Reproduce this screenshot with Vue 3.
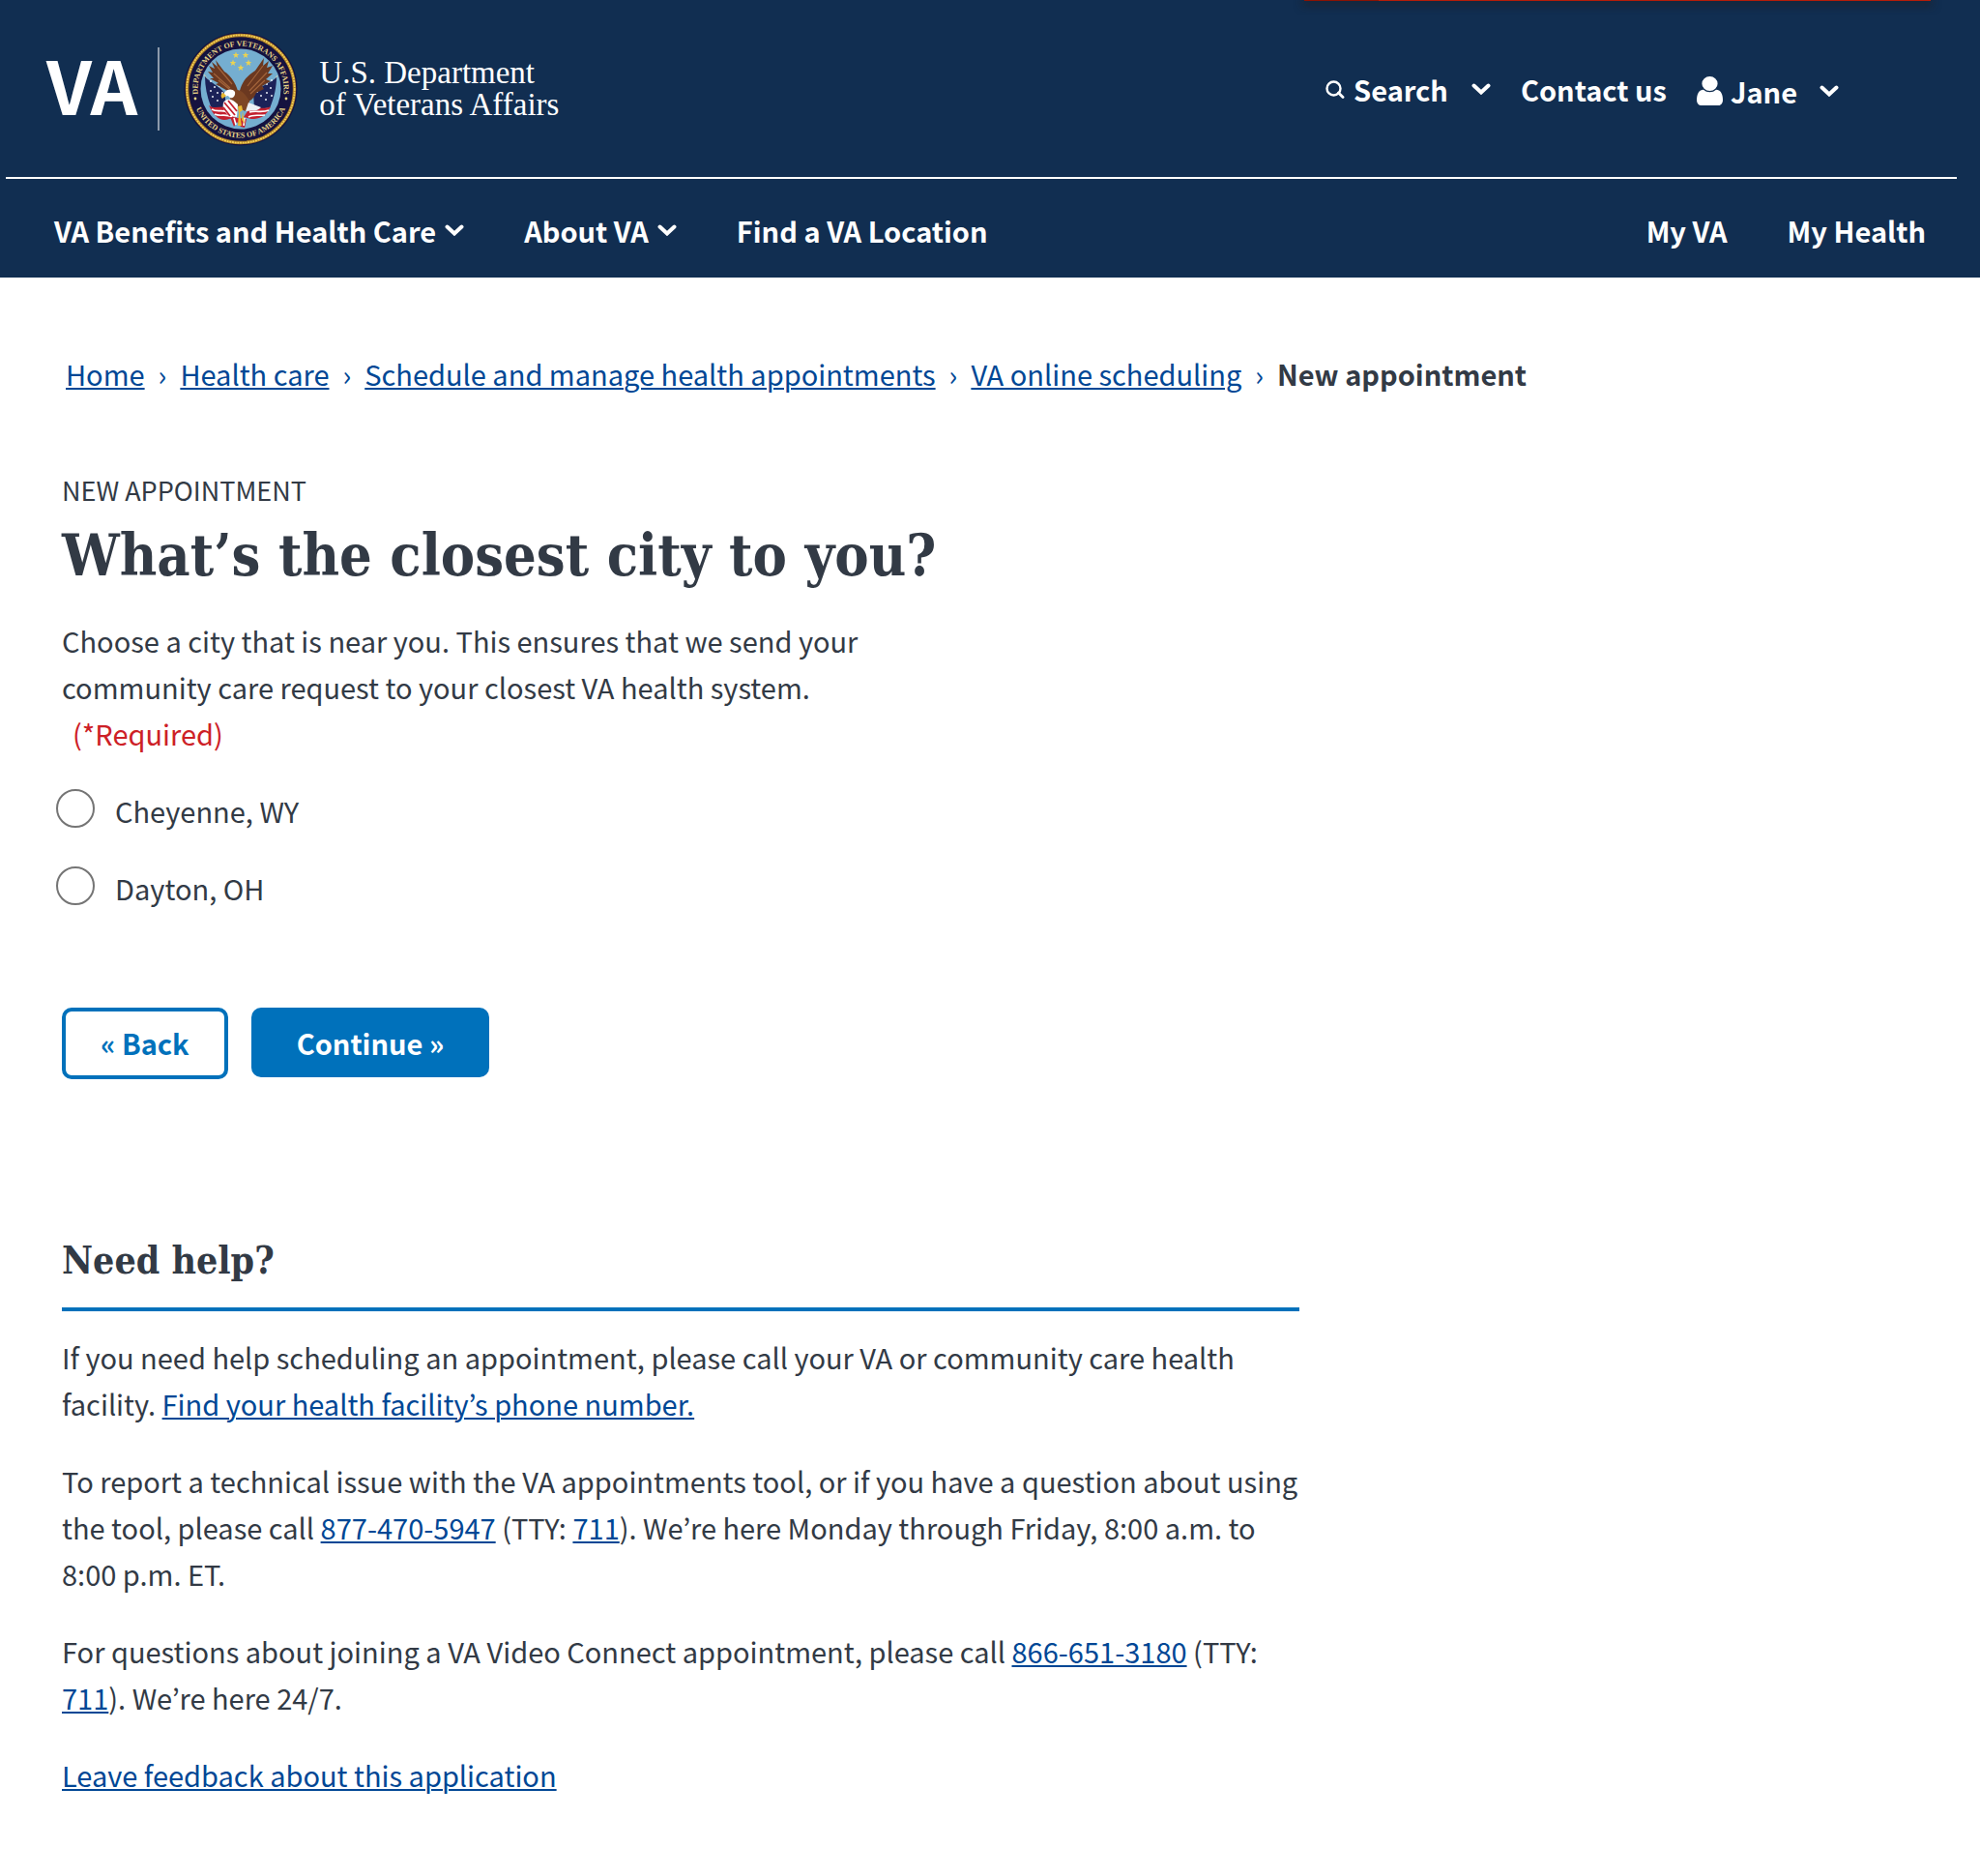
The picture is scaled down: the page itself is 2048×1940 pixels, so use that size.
<script setup>
import { ref } from 'vue'

const crumbs = [
  'Home',
  'Health care',
  'Schedule and manage health appointments',
  'VA online scheduling',
]
const cities = [
  { id: 'cheyenne', label: 'Cheyenne, WY' },
  { id: 'dayton', label: 'Dayton, OH' },
]
const city = ref('')

// Centres of the five stars above the eagle
const stars = [[-5, -35], [5, -35], [-8, -27], [8, -27], [0, -22]]
// Stars on the two flags
const flagStars = [
  [-31, -8], [-27, -2], [-31, 2], [-24, 4], [-29, 8], [-22, -3], [-24, 12], [-19, 4],
  [32, -9], [27, -5], [22, -1], [31, -1], [27, 4], [32, 7], [21, 7], [26, 11], [17, 3],
]
</script>

<template>
  <header class="header">
    <div class="alert-edge"></div>
    <div class="masthead">
      <a class="logo" href="#">
        <span class="logo-va">VA</span>
        <span class="logo-rule"></span>
        <svg class="seal" viewBox="-59 -59 118 118" role="img" aria-label="Seal">
          <defs>
            <path id="seal-top" d="M-43.4 10 A44.5 44.5 0 1 1 43.4 10" />
            <path id="seal-bottom" d="M-48.5 14 A50.5 50.5 0 0 0 48.5 14" />
          </defs>
          <circle r="58.5" fill="#15123f" />
          <circle r="55.5" fill="none" stroke="#a87a25" stroke-width="3.4" />
          <circle r="55.7" fill="none" stroke="#f3cf57" stroke-width="1.8" stroke-dasharray="2 0.7" />
          <circle r="43" fill="#15123f" />
          <circle r="41.5" fill="#75aed0" />
          <g class="seal-text">
            <text><textPath href="#seal-top" startOffset="50%" text-anchor="middle">DEPARTMENT OF VETERANS AFFAIRS</textPath></text>
            <text><textPath href="#seal-bottom" startOffset="50%" text-anchor="middle">UNITED STATES OF AMERICA</textPath></text>
          </g>
          <circle cx="-47" cy="10" r="1.4" fill="#e5d386" />
          <circle cx="47" cy="10" r="1.4" fill="#e5d386" />
          <path
            v-for="(s, i) in stars"
            :key="i"
            :transform="`translate(${s[0]} ${s[1]})`"
            d="M0 -3.4 L.9 -1 3.3 -1 1.4 .6 2.1 3 0 1.6 -2.1 3 -1.4 .6 -3.3 -1 -.9 -1Z"
            fill="#ecd34f"
          />
          <!-- flag poles and unions -->
          <path d="M-38 -15 L-8 30 M38 -14 L8 28" stroke="#d9d0b0" stroke-width="1" />
          <path d="M-37 -13 C-32 -7 -22 -3 -17 4 L-14 22 C-22 19 -27 22 -31 18 C-35 8 -37 -3 -37 -13Z" fill="#1c2258" />
          <path d="M37 -12 C31 -6 22 -4 13 4 L14 20 C22 23 26 18 30 20 C35 8 37 -3 37 -12Z" fill="#1c2258" />
          <circle v-for="(s, i) in flagStars" :key="'f' + i" :cx="s[0]" :cy="s[1]" r="1" fill="#e8ecf5" />
          <!-- stripes -->
          <path d="M-33 17 C-26 22 -20 16 -12 20 L-4 29 -12 31 C-20 34 -27 30 -33 17Z" fill="#c3202f" />
          <path d="M-30 21 C-24 25 -18 20 -11 25 M-27 26 C-21 29 -16 25 -9 29" stroke="#fff" stroke-width="1.6" fill="none" />
          <path d="M31 18 C23 22 17 18 9 20 L3 29 11 31 C19 31 26 29 31 18Z" fill="#c3202f" />
          <path d="M29 22 C22 25 16 22 9 24 M25 27 C18 28 13 26 8 29" stroke="#fff" stroke-width="1.6" fill="none" />
          <path d="M-11 29 L-7 39 -4 34 0 39 4 40 6 31Z" fill="#c3202f" />
          <path d="M-7 30 L-5 37 M4 30 L3 38" stroke="#fff" stroke-width="1.6" />
          <!-- wings and body -->
          <path d="M-2 7 C-3 -3 -10 -14 -17 -18 L-26 -30 -24 -23 -30 -28 -27 -21 -33 -24 -29 -17 -34 -18 -28 -11 -32 -11 -23 -6 -26 -5 -17 0 C-10 4 -6 8 -2 7Z" fill="#6b3820" />
          <path d="M-2 8 C-1 -4 5 -13 15 -19 L24 -32 23 -24 29 -29 27 -22 33 -24 28 -16 33 -16 26 -10 31 -8 22 -3 24 0 16 4 C13 12 6 15 1 14Z" fill="#6b3820" />
          <path d="M-24 -23 L-9 -5 M-28 -16 L-11 -1 M-23 -9 L-12 0 M23 -24 L7 -3 M27 -17 L9 2 M25 -9 L10 5" stroke="#a2633a" stroke-width="1.2" fill="none" />
          <path d="M-11 3 C-6 -2 3 2 6 8 C11 14 10 20 5 23 C-2 21 -8 16 -11 10Z" fill="#7d4524" />
          <path d="M-18 8 C-18 1 -10 -2 -6 3 C-5 8 -10 12 -13 7Z" fill="#fff" />
          <path d="M-18 4 C-21 5 -21 8 -19 10 L-15 7Z" fill="#e9b931" />
          <!-- shield and tail -->
          <path d="M-18 14 C-14 9 -9 10 -3 16 L-4 29 C-13 29 -20 23 -18 14Z" fill="#fff" />
          <path d="M-17 14 L-6 27 M-13 12 L-4 23 M-18 19 L-11 28" stroke="#c3202f" stroke-width="1.8" />
          <path d="M8 14 L21 19 C17 24 11 22 5 23Z" fill="#edf0f4" />
          <path d="M-3 18 L1 17 2 22 -1 24 1 38 -3 38 -2 25Z M2 23 L4 36 1 32Z" fill="#e9b931" />
        </svg>
        <span class="logo-name">U.S. Department<br />of Veterans Affairs</span>
      </a>
      <div class="tools">
        <button class="tool search" type="button">
          <svg class="icon-search" viewBox="0 0 20 20" aria-hidden="true">
            <circle cx="8.5" cy="9.5" r="7" fill="none" stroke="currentColor" stroke-width="2.4" />
            <path d="M13.5 14 L18 18.5" stroke="currentColor" stroke-width="2.8" stroke-linecap="round" />
          </svg>
          <span>Search</span>
          <svg class="chevron" viewBox="0 0 20 12" aria-hidden="true"><path d="M2.5 2.5 L10 9.5 L17.5 2.5" /></svg>
        </button>
        <a class="tool contact" href="#">Contact us</a>
        <button class="tool account" type="button">
          <svg class="icon-user" viewBox="256 128 1280 1536" preserveAspectRatio="none" aria-hidden="true">
            <path fill="currentColor" d="M1536 1399q0 109-62.500 187t-150.500 78h-854q-88 0-150.500-78t-62.500-187q0-85 8.500-160.500t31.500-152 58.500-131 94-89 134.500-34.500q131 128 313 128t313-128q76 0 134.500 34.500t94 89 58.500 131 31.500 152 8.500 160.500zM1280 512q0 159-112.500 271.500t-271.500 112.500-271.500-112.500-112.500-271.500 112.500-271.500 271.500-112.500 271.500 112.500 112.500 271.500z" />
          </svg>
          <span>Jane</span>
          <svg class="chevron" viewBox="0 0 20 12" aria-hidden="true"><path d="M2.5 2.5 L10 9.5 L17.5 2.5" /></svg>
        </button>
      </div>
    </div>
    <nav class="nav" aria-label="Main">
      <button class="nav-item" type="button">
        VA Benefits and Health Care
        <svg class="chevron" viewBox="0 0 20 12" aria-hidden="true"><path d="M2.5 2.5 L10 9.5 L17.5 2.5" /></svg>
      </button>
      <button class="nav-item" type="button">
        About VA
        <svg class="chevron" viewBox="0 0 20 12" aria-hidden="true"><path d="M2.5 2.5 L10 9.5 L17.5 2.5" /></svg>
      </button>
      <a class="nav-item" href="#">Find a VA Location</a>
      <a class="nav-item nav-end" href="#">My VA</a>
      <a class="nav-item" href="#">My Health</a>
    </nav>
  </header>

  <main class="main">
    <nav class="crumbs" aria-label="Breadcrumb">
      <template v-for="c in crumbs" :key="c">
        <a href="#">{{ c }}</a>
        <span class="crumb-sep">›</span>
      </template>
      <strong>New appointment</strong>
    </nav>

    <form class="form" @submit.prevent>
      <p class="eyebrow">NEW APPOINTMENT</p>
      <h1>What’s the closest city to you?</h1>
      <fieldset class="cities">
        <legend>
          Choose a city that is near you. This ensures that we send your community care request to
          your closest VA health system. <span class="required">(*Required)</span>
        </legend>
        <div v-for="c in cities" :key="c.id" class="city">
          <input :id="c.id" v-model="city" type="radio" name="city" :value="c.id" />
          <label :for="c.id">{{ c.label }}</label>
        </div>
      </fieldset>
      <div class="actions">
        <button class="btn btn-back" type="button">« Back</button>
        <button class="btn btn-next" type="submit">Continue »</button>
      </div>
    </form>

    <section class="help">
      <h2>Need help?</h2>
      <p>
        If you need help scheduling an appointment, please call your VA or community care health
        facility. <a href="#">Find your health facility’s phone number.</a>
      </p>
      <p>
        To report a technical issue with the VA appointments tool, or if you have a question about
        using the tool, please call <a class="phone" href="#">877-470-5947</a> (TTY: <a href="#">711</a>). We’re here
        Monday through Friday, 8:00 a.m. to 8:00 p.m. ET.
      </p>
      <p>
        For questions about joining a VA Video Connect appointment, please call
        <a class="phone" href="#">866-651-3180</a> (TTY: <a href="#">711</a>). We’re here 24/7.
      </p>
      <p><a href="#">Leave feedback about this application</a></p>
    </section>
  </main>
</template>

<style>
body {
  margin: 0;
  background: #fff;
  color: #323a45;
  font: 29px/48px "Noto Sans CJK KR", "Noto Sans CJK SC", "Open Sans", sans-serif;
}
</style>

<style scoped>
a {
  color: #004795;
  text-decoration-thickness: 2px;
  text-underline-offset: 2px;
}
button {
  font: inherit;
  font-weight: 700;
  cursor: pointer;
}
p {
  margin: 0;
}

.header {
  position: relative;
  overflow: hidden;
  background: #112e51;
  color: #fff;
}
.alert-edge {
  position: absolute;
  top: 0;
  left: 1349px;
  right: 51px;
  height: 1px;
  background: linear-gradient(to right, #8b1303 77px, #b51d09 77px);
  box-shadow: 0 2px 10px 2px rgba(30, 30, 30, 0.8);
}
.masthead {
  display: flex;
  align-items: center;
  justify-content: space-between;
  min-height: 183px;
  margin: 0 24px 0 6px;
  padding: 0 122px 0 42px;
  border-bottom: 2px solid #fff;
}
.logo {
  display: flex;
  align-items: center;
  color: #fff;
  text-decoration: none;
}
.logo-va {
  padding-bottom: 12px;
  font-size: 76px;
  font-weight: 700;
  line-height: 84px;
}
.logo-rule {
  width: 2px;
  height: 86px;
  margin: 0 25px 0 21px;
  background: #8d9aab;
}
.seal {
  width: 118px;
  height: 118px;
}
.seal-text {
  fill: #e5d386;
  font: bold 8px "Liberation Serif", serif;
}
.logo-name {
  margin-left: 22px;
  font: 33px/33px "Liberation Serif", serif;
}
.tools {
  display: flex;
  align-items: center;
  gap: 31px;
}
.tool {
  display: flex;
  align-items: center;
  padding: 0;
  border: 0;
  background: none;
  color: #fff;
  font-weight: 700;
  text-decoration: none;
}
.search {
  gap: 9px;
}
.search .chevron,
.account .chevron {
  margin-left: 15px;
}
.account {
  gap: 8px;
  padding-top: 4px;
}
.icon-search {
  width: 20px;
  height: 20px;
}
.icon-user {
  width: 27px;
  height: 30px;
}
.chevron {
  width: 20px;
  height: 12px;
  fill: none;
  stroke: currentColor;
  stroke-width: 4;
  stroke-linecap: round;
}
.nav {
  display: flex;
  padding: 29px 25px 25px;
}
.nav-item {
  display: flex;
  align-items: center;
  gap: 9px;
  padding: 0 31px;
  border: 0;
  background: none;
  color: #fff;
  font-weight: 700;
  text-decoration: none;
}
.nav-end {
  margin-left: auto;
}

.main {
  padding: 75px 64px 64px;
}
.crumbs {
  display: flex;
  flex-wrap: wrap;
  gap: 14px;
  padding-left: 4px;
}
.crumb-sep {
  color: #004795;
}
.form {
  max-width: 840px;
  margin-top: 77px;
}
.eyebrow {
  font-size: 27px;
  line-height: 40px;
}
h1,
h2 {
  font-family: "DejaVu Serif Condensed", "DejaVu Serif", serif;
  font-weight: 700;
}
h1 {
  margin: 16px 0 0;
  font-size: 59px;
  line-height: 64px;
  white-space: nowrap;
}
.cities {
  min-width: 0;
  margin: 31px 0 0;
  padding: 0;
  border: 0;
}
.cities legend {
  padding: 0;
}
.required {
  display: inline-block;
  margin-left: 11px;
  color: #cd2026;
}
.city {
  display: flex;
  gap: 21px;
  margin: 32px 0 0 -6px;
}
.city input {
  appearance: none;
  width: 40px;
  height: 40px;
  margin: 2px 0 0;
  border: 2px solid #757575;
  border-radius: 50%;
}
.city input:checked {
  background: #0071bb;
  box-shadow: inset 0 0 0 4px #fff;
}
.actions {
  display: flex;
  align-items: flex-start;
  gap: 24px;
  margin-top: 100px;
}
.btn {
  border: 0;
  border-radius: 10px;
}
.btn-back {
  padding: 8px 36px 10px;
  border: 4px solid #0071bb;
  background: #fff;
  color: #0071bb;
}
.btn-next {
  padding: 12px 47px;
  background: #0071bb;
  color: #fff;
}
.help {
  max-width: 1280px;
  margin-top: 163px;
}
h2 {
  margin: 0 0 23px;
  padding-bottom: 25px;
  border-bottom: 4px solid #0071bb;
  font-size: 39px;
  line-height: 48px;
}
.help p + p {
  margin-top: 32px;
}
.phone {
  white-space: nowrap;
}
</style>
